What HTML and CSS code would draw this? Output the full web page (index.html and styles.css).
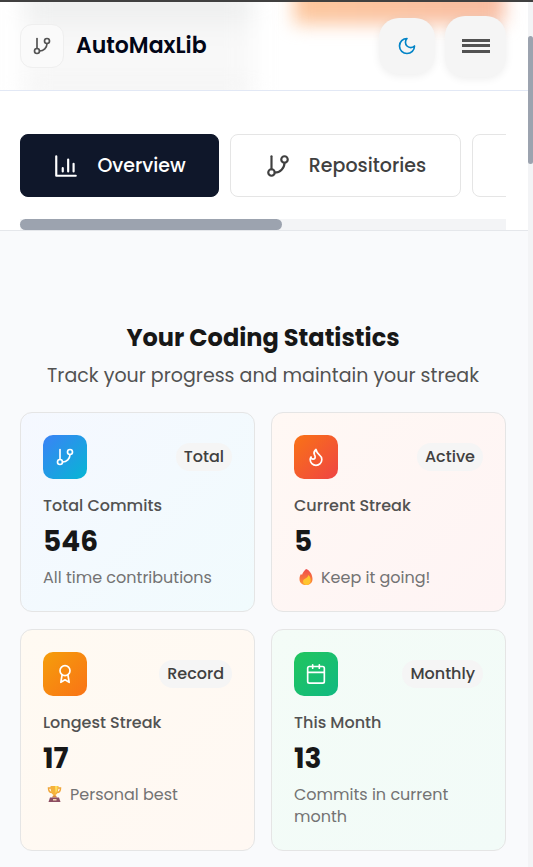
FILE: index.html
```html
<!DOCTYPE html>
<html lang="en">
<head>
<meta charset="utf-8">
<meta name="viewport" content="width=device-width, initial-scale=1">
<title>AutoMaxLib</title>
<link rel="stylesheet" href="styles.css">
</head>
<body>
<svg class="defs" aria-hidden="true">
  <symbol id="branch" viewBox="0 0 24 24"><path d="M6 3v12"/><circle cx="18" cy="6" r="3"/><circle cx="6" cy="18" r="3"/><path d="M18 9a9 9 0 0 1-9 9"/></symbol>
</svg>
<div class="page">
  <div class="content">
    <header class="header">
      <div class="glow glow-text"></div>
      <div class="glow glow-orange"></div>
      <a class="brand" href="#">
        <span class="logo"><svg class="icon"><use href="#branch"/></svg></span>
        <span class="brand-name">AutoMaxLib</span>
      </a>
      <div class="actions">
        <button class="round theme" aria-label="Dark mode"><svg class="icon" viewBox="0 0 24 24"><path d="M12 3a6 6 0 0 0 9 9 9 9 0 1 1-9-9Z"/></svg></button>
        <button class="round menu" aria-label="Menu"><span class="bars"></span></button>
      </div>
    </header>
    <nav class="tabs">
      <div class="tab-list">
        <button class="tab active"><svg class="icon" viewBox="0 0 24 24"><path d="M3 3v18h18M9 17v-3M14 17V6M19 17v-7"/></svg><span>Overview</span></button>
        <button class="tab"><svg class="icon"><use href="#branch"/></svg><span>Repositories</span></button>
        <button class="tab" aria-label="More"></button>
      </div>
      <div class="track"><div class="thumb"></div></div>
    </nav>
    <main class="stats">
      <h2>Your Coding Statistics</h2>
      <p class="subtitle">Track your progress and maintain your streak</p>
      <div class="grid">
        <article class="card blue">
          <div class="card-top"><span class="tile"><svg class="icon"><use href="#branch"/></svg></span><span class="badge">Total</span></div>
          <h3>Total Commits</h3>
          <div class="number">546</div>
          <p class="note">All time contributions</p>
        </article>
        <article class="card red">
          <div class="card-top"><span class="tile"><svg class="icon" viewBox="0 0 24 24"><path d="M8.5 14.5A2.5 2.5 0 0 0 11 12c0-1.38-.5-2-1-3-1.072-2.143-.224-4.054 2-6 .5 2.5 2 4.9 4 6.5 2 1.6 3 3.5 3 5.5a7 7 0 1 1-14 0c0-1.153.433-2.294 1-3a2.5 2.5 0 0 0 2.5 2.5z"/></svg></span><span class="badge">Active</span></div>
          <h3>Current Streak</h3>
          <div class="number">5</div>
          <p class="note"><svg class="emoji" viewBox="0 0 18 18">
            <defs><linearGradient id="flame" x1="0" y1="0" x2="0" y2="1"><stop offset="0" stop-color="#ef4b4b"/><stop offset=".6" stop-color="#f8753c"/><stop offset="1" stop-color="#ff9b35"/></linearGradient></defs>
            <path fill="url(#flame)" d="M9 1c3.500 1 6.500 5.500 6.500 10 0 4-3 6-6.500 6s-6.500-2-6.500-6c0-2 .6-4 1.500-5l1 1C5.500 5 7 3 9 1z"/><path fill="#ffc52e" d="M11.500 7c2 2 2.500 4 2 6.500S11 17 9.500 17s-3.500-1.500-3.500-3.500S7.500 11 8.500 10.500s2.500-1.500 3-3.500z"/></svg>Keep it going!</p>
        </article>
        <article class="card amber">
          <div class="card-top"><span class="tile"><svg class="icon" viewBox="0 0 24 24"><circle cx="12" cy="8" r="6"/><path d="M15.477 12.890 17 22l-5-3-5 3 1.523-9.110"/></svg></span><span class="badge">Record</span></div>
          <h3>Longest Streak</h3>
          <div class="number">17</div>
          <p class="note"><svg class="emoji" viewBox="0 0 18 18"><path d="M5 3H2.500c0 3 1 4.500 3.500 4.500M12 3h2.500c0 3-1 4.500-3.500 4.500" fill="none" stroke="#f0a63a" stroke-width="1.500"/><path fill="#f5b23c" d="M4.500 1h8c0 5-1 8-3 9v2H7.500v-2C5.500 9 4.500 6 4.500 1z"/><path fill="#ffdd5a" d="M9 1h2.500c0 4-.5 6-2 7z"/><path fill="#d98a3e" d="M7 10.500h3l1 2H6z"/><path fill="#8c4d62" d="M4 12.500h9l1.500 4.500h-12z"/><path fill="#f3d6b0" d="M7 14h3.500v1.500H7z"/></svg>Personal best</p>
        </article>
        <article class="card green">
          <div class="card-top"><span class="tile"><svg class="icon" viewBox="0 0 24 24"><path d="M8 1v4M16 1v4M2 10h20"/><rect x="2" y="3" width="20" height="20" rx="2"/></svg></span><span class="badge">Monthly</span></div>
          <h3>This Month</h3>
          <div class="number">13</div>
          <p class="note">Commits in current month</p>
        </article>
      </div>
    </main>
  </div>
  <div class="scrollbar"><div class="scroll-thumb"></div></div>
</div>
</body>
</html>
```
FILE: styles.css
```css
* { box-sizing: border-box; }
body {
  margin: 0;
  font-family: Poppins, Inter, "Open Sans", sans-serif;
  color: #171717;
  background: #f9fafc;
}
h2, h3, p { margin: 0; }
button { font: inherit; padding: 0; border: 0; }
.defs { position: absolute; width: 0; height: 0; }
.icon {
  width: 20px;
  height: 20px;
  flex: none;
  fill: none;
  stroke: currentColor;
  stroke-width: 2;
  stroke-linecap: round;
  stroke-linejoin: round;
}
.page {
  display: grid;
  grid-template-columns: minmax(0, 1fr) 5px;
  min-height: 100vh;
  border-top: 2px solid #404040;
}
.scrollbar { background: #f3f4f6; padding-top: 34px; }
.scroll-thumb { height: 128px; border-radius: 3px; background: #9ca3af; }

.header {
  position: relative;
  overflow: hidden;
  display: flex;
  align-items: center;
  justify-content: space-between;
  height: 89px;
  padding: 0 22px 0 20px;
  background: #fff;
  border-bottom: 1px solid #e2e8f5;
}
.glow { position: absolute; }
.glow-text {
  inset: -10px 52% -10px 24px;
  background: linear-gradient(#e6e8e8, #f7f7f7 35%, #f9f9f9 70%, #f2f2f2);
  filter: blur(12px);
}
.glow-orange {
  top: -30px;
  right: 24px;
  width: 210px;
  height: 52px;
  background: linear-gradient(90deg, #fdc79d, #f8bba0);
  filter: blur(9px);
}
.brand, .actions { position: relative; display: flex; align-items: center; }
.brand { gap: 12px; color: #020617; text-decoration: none; }
.logo {
  display: grid;
  place-items: center;
  width: 44px;
  height: 44px;
  border: 1px solid #efefef;
  border-radius: 12px;
  background: #fafafa;
  color: #525252;
}
.brand-name { font-size: 22px; font-weight: 600; line-height: 34px; }
.actions { gap: 10px; }
.round {
  display: grid;
  place-items: center;
  border-radius: 20px;
  background: #f5f5f5;
  box-shadow: 0 2px 8px rgba(0, 0, 0, .07);
}
.theme { width: 56px; height: 56px; color: #0284c7; }
.menu { width: 61px; height: 61px; }
.bars {
  width: 28px;
  height: 14px;
  background: linear-gradient(#525252 3px, transparent 3px 5px, #525252 5px 8px, transparent 8px 11px, #525252 11px);
}

.tabs {
  padding: 43px 22px 0 20px;
  background: #fff;
  border-bottom: 1px solid #e5e7eb;
}
.tab-list { display: flex; gap: 11px; overflow: hidden; }
.tab {
  display: flex;
  flex: none;
  align-items: center;
  justify-content: center;
  gap: 18px;
  width: 231px;
  height: 63px;
  border: 1px solid #e5e5e5;
  border-radius: 8px;
  background: #fff;
  color: #404040;
  font-size: 19px;
  font-weight: 500;
}
.tab .icon { width: 26px; height: 26px; }
.tab.active { width: 199px; border-color: #0f172a; background: #0f172a; color: #fff; }
.track { margin-top: 22px; background: #f3f4f6; }
.thumb { width: 54%; height: 11px; border-radius: 6px; background: #9ca3af; }

.stats { padding: 89px 22px 16px 20px; background: #f9fafc; }
h2 {
  font-size: 24px;
  font-weight: 700;
  line-height: 36px;
  text-align: center;
}
.subtitle {
  margin: 6px 0 22px;
  color: #525252;
  font-size: 19px;
  line-height: 28px;
  text-align: center;
}
.grid { display: grid; grid-template-columns: 1fr 1fr; gap: 17px 16px; }
.card { padding: 22px; border: 1px solid #e5e5e5; border-radius: 12px; }
.card-top { display: flex; align-items: center; justify-content: space-between; }
.tile {
  display: grid;
  place-items: center;
  width: 44px;
  height: 44px;
  border-radius: 10px;
  color: #fff;
}
.badge {
  padding: 2px 8px;
  border-radius: 14px;
  background: #f5f5f5;
  color: #404040;
  font-size: 16px;
  font-weight: 500;
  line-height: 24px;
}
h3 {
  margin-top: 15px;
  color: #525252;
  font-size: 16px;
  font-weight: 500;
  line-height: 24px;
}
.number { margin-top: 6px; font-size: 28px; font-weight: 700; line-height: 36px; }
.note {
  margin-top: 7px;
  color: #737373;
  font-size: 16px;
  line-height: 22px;
}
.emoji { width: 18px; height: 18px; margin: 0 6px 0 3px; vertical-align: -3px; }
.blue { background: linear-gradient(135deg, #f5f8ff, #f1fbfd); }
.blue .tile { background: linear-gradient(135deg, #3b82f6, #06b6d4); }
.red { background: linear-gradient(135deg, #fff8f4, #fef4f4); }
.red .tile { background: linear-gradient(135deg, #f97316, #ef4444); }
.amber { background: linear-gradient(135deg, #fffaf2, #fff8f3); }
.amber .tile { background: linear-gradient(135deg, #f59e0b, #f97316); }
.green { background: linear-gradient(135deg, #f4fcf7, #f2fbf8); }
.green .tile { background: linear-gradient(135deg, #22c55e, #10b981); }
```
